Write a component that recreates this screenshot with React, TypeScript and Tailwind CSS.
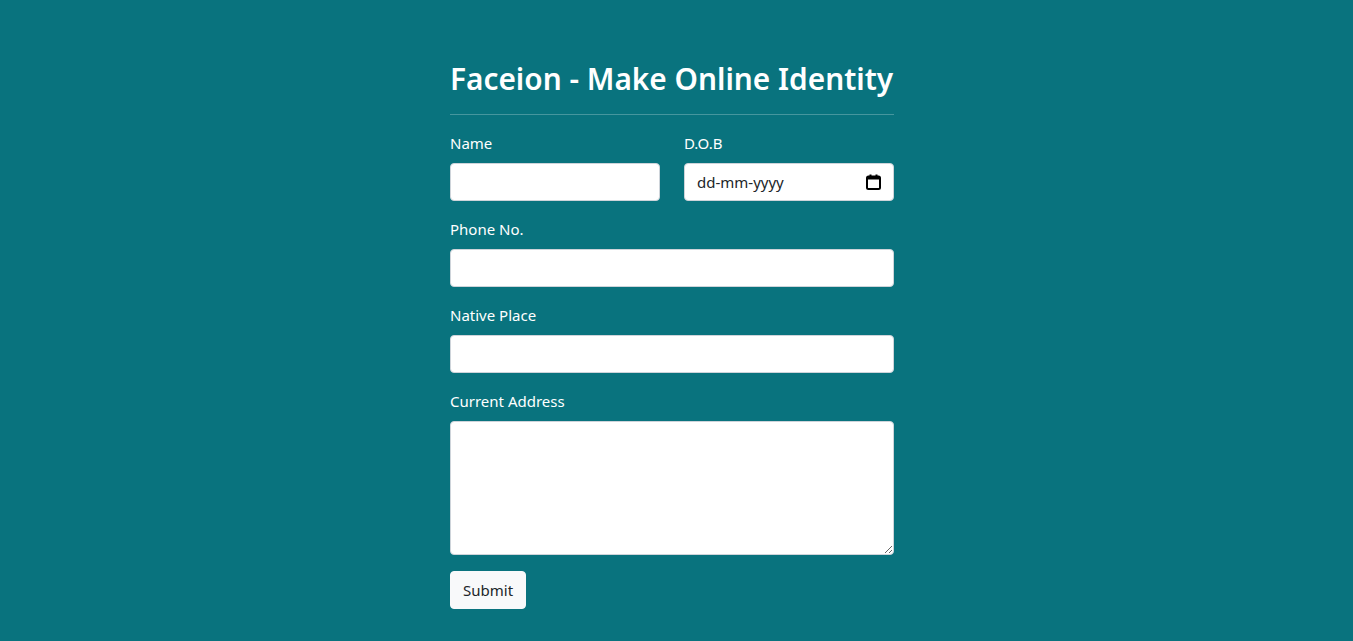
import React from "react";

const inputCls =
  "block w-full h-[38px] rounded-[4px] border border-[#ced4da] bg-white px-3 text-[15px] text-[#212529] outline-none";

const Field = ({ label, children }: { label: string; children: React.ReactNode }) => (
  <div className="mb-4">
    <label className="mb-2 block text-[15px] leading-6 text-white">{label}</label>
    {children}
  </div>
);

const CalendarIcon = () => (
  <svg width="15" height="16" viewBox="0 0 15 16" fill="none">
    <rect x="1" y="2.5" width="13" height="12.5" rx="1.5" stroke="#000" strokeWidth="2" />
    <rect x="1" y="2.5" width="13" height="3" fill="#000" />
    <rect x="3.5" y="0.5" width="2" height="3" fill="#000" />
    <rect x="9.5" y="0.5" width="2" height="3" fill="#000" />
  </svg>
);

export default function App() {
  return (
    <div
      className="min-h-[641px] bg-[#09737e] pr-[9px]"
      style={{ fontFamily: '"Noto Sans", "Open Sans", sans-serif' }}
    >
      <div className="mx-auto w-[444px] pt-[60px]">
        <h1 className="whitespace-nowrap text-[29.8px] font-semibold leading-[38px] text-white">
          Faceion - Make Online Identity
        </h1>
        <hr className="mt-4 mb-4 border-t border-white/25" />

        <div className="grid grid-cols-2 gap-6">
          <Field label="Name">
            <input type="text" className={inputCls} />
          </Field>
          <Field label="D.O.B">
            <div className={inputCls + " flex items-center justify-between"}>
              <span className="text-[#212529]">dd-mm-yyyy</span>
              <CalendarIcon />
            </div>
          </Field>
        </div>

        <Field label="Phone No.">
          <input type="text" className={inputCls} />
        </Field>

        <Field label="Native Place">
          <input type="text" className={inputCls} />
        </Field>

        <Field label="Current Address">
          <textarea className="block h-[134px] w-full resize-y rounded-[4px] border border-[#ced4da] bg-white px-3 py-1.5 text-[15px] text-[#212529] outline-none" />
        </Field>

        <button className="h-[38px] rounded-[4px] border border-[#f8f9fa] bg-[#f8f9fa] px-3 text-[15px] text-[#212529]">
          Submit
        </button>
      </div>
    </div>
  );
}
